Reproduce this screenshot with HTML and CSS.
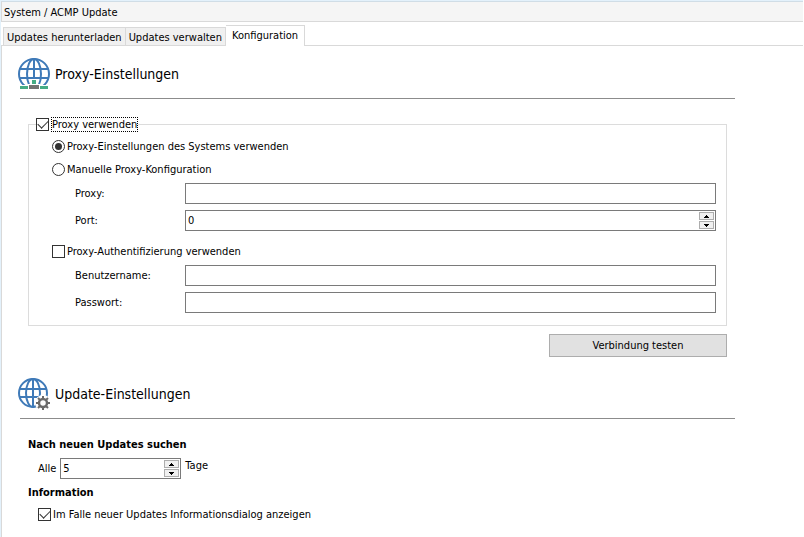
FILE: index.html
```html
<!DOCTYPE html>
<html lang="de">
<head>
  <meta charset="UTF-8">
  <title>System / ACMP Update</title>
  <link rel="stylesheet" href="styles.css">
</head>
<body>
  <div class="window">
    <header class="breadcrumb">System / ACMP Update</header>

    <nav class="tabs" role="tablist">
      <button type="button" class="tab" role="tab">Updates herunterladen</button>
      <button type="button" class="tab" role="tab">Updates verwalten</button>
      <button type="button" class="tab active" role="tab" aria-selected="true">Konfiguration</button>
    </nav>

    <form class="page">
      <section>
        <div class="section-head">
          <svg width="32" height="32" viewBox="0 0 32 32" aria-hidden="true">
            <g fill="none" stroke="#3f7ab8" stroke-width="2">
              <circle cx="16" cy="16" r="15" />
              <ellipse cx="16" cy="16" rx="7" ry="15" />
              <path d="M16 1v30M2 11h28M1 20h30" />
            </g>
            <path d="M0 27h10v-1h3v-5h6v5h3v1h10v5H0z" fill="#fff" />
            <path d="M14 22h4v4h-4zM2 28h8v3H2zM22 28h8v3h-8z" fill="#46ac85" />
            <path d="M11 27h10v4H11z" fill="#737373" />
          </svg>
          <h2>Proxy-Einstellungen</h2>
        </div>
        <hr>

        <fieldset>
          <legend>
            <input type="checkbox" id="useProxy" checked>
            <label for="useProxy" class="focused">Proxy verwenden</label>
          </legend>

          <div class="option">
            <input type="radio" name="mode" id="modeSystem" checked>
            <label for="modeSystem">Proxy-Einstellungen des Systems verwenden</label>
          </div>
          <div class="option">
            <input type="radio" name="mode" id="modeManual">
            <label for="modeManual">Manuelle Proxy-Konfiguration</label>
          </div>

          <div class="fields">
            <label for="proxy">Proxy:</label>
            <input type="text" id="proxy" class="field">
            <label for="port">Port:</label>
            <div class="field spinner">
              <input type="text" id="port" value="0">
              <div class="arrows">
                <button type="button" aria-label="Port erhöhen"><svg width="5" height="3"><path d="M2 0h1v1h1v1h1v1H0V2h1V1h1z" /></svg></button>
                <button type="button" aria-label="Port verringern"><svg width="5" height="3"><path d="M0 0h5v1H4v1H3v1H2V2H1V1H0z" /></svg></button>
              </div>
            </div>
          </div>

          <div class="option">
            <input type="checkbox" id="useAuth">
            <label for="useAuth">Proxy-Authentifizierung verwenden</label>
          </div>

          <div class="fields">
            <label for="user">Benutzername:</label>
            <input type="text" id="user" class="field">
            <label for="password">Passwort:</label>
            <input type="password" id="password" class="field">
          </div>
        </fieldset>

        <button type="button" class="btn-test">Verbindung testen</button>
      </section>

      <section>
        <div class="section-head">
          <svg width="32" height="32" viewBox="0 0 32 32" aria-hidden="true">
            <g fill="none" stroke="#3f7ab8" stroke-width="2">
              <circle cx="15" cy="15" r="14" />
              <ellipse cx="15" cy="15" rx="7" ry="14" />
              <path d="M15 1v28M2 11h26M2 19h26" />
            </g>
            <circle cx="25" cy="25" r="8" fill="#fff" />
            <g stroke="#6b6b6b" fill="none">
              <circle cx="25" cy="25" r="4" stroke-width="2.500" />
              <path d="M25 18v3M25 29v3M18 25h3M29 25h3M20 20l2 2M28 28l2 2M20 30l2-2M28 22l2-2" stroke-width="2" />
            </g>
          </svg>
          <h2>Update-Einstellungen</h2>
        </div>
        <hr>

        <div class="update">
          <h3>Nach neuen Updates suchen</h3>
          <div class="interval">
            <label for="days">Alle</label>
            <div class="field spinner">
              <input type="text" id="days" value="5">
              <div class="arrows">
                <button type="button" aria-label="Tage erhöhen"><svg width="5" height="3"><path d="M2 0h1v1h1v1h1v1H0V2h1V1h1z" /></svg></button>
                <button type="button" aria-label="Tage verringern"><svg width="5" height="3"><path d="M0 0h5v1H4v1H3v1H2V2H1V1H0z" /></svg></button>
              </div>
            </div>
            <span class="unit">Tage</span>
          </div>
          <h3>Information</h3>
          <div class="option">
            <input type="checkbox" id="showInfo" checked>
            <label for="showInfo">Im Falle neuer Updates Informationsdialog anzeigen</label>
          </div>
        </div>
      </section>
    </form>
  </div>
</body>
</html>
```
FILE: styles.css
```css
* {
  box-sizing: border-box;
}

body {
  margin: 0;
  background: #fff;
  color: #000;
  font-family: "DejaVu Sans Condensed", Tahoma, sans-serif;
  font-size: 11px;
  line-height: 15px;
}

input, button {
  margin: 0;
  font: inherit;
  color: inherit;
}

.window {
  min-height: calc(100vh - 1px);
  margin-right: 1px;
  border-top: 1px solid #e3f1fb;
  border-left: 1px solid #e3f1fb;
}

.breadcrumb {
  height: 21px;
  padding: 3px 2px 2px;
  background: #f5f5f5;
  border: 1px solid #d9d9d9;
  border-width: 1px 0 1px 1px;
  border-top-color: #d0dde6;
}

.tabs {
  display: flex;
  align-items: flex-end;
  height: 24px;
  padding: 3px 0 0 2px;
  border-bottom: 1px solid #d9d9d9;
}

.tab {
  height: 18px;
  padding: 1px 3px 0;
  background: #f0f0f0;
  border: 1px solid #d9d9d9;
  border-width: 1px 1px 0 0;
  white-space: nowrap;
}

.tab:first-child {
  border-left-width: 1px;
}

.tab.active {
  height: 21px;
  margin-bottom: -1px;
  padding: 0 6px 2px;
  background: #fff;
}

.page {
  min-height: calc(100vh - 47px);
  padding: 12px 68px 12px 18px;
  border-left: 1px solid #d9d9d9;
}

.section-head {
  display: flex;
  align-items: center;
  gap: 5px;
  margin-left: -2px;
}

hr {
  height: 1px;
  margin: 8px 0 0;
  background: #8c8c8c;
  border: 0;
}

h2 {
  margin: 0;
  font-size: 14px;
  font-weight: normal;
  line-height: 20px;
}

h3 {
  margin: 0;
  font-size: 11px;
  font-weight: bold;
}

fieldset {
  min-width: 0;
  margin: 18px 8px 0;
  padding: 3px 10px 3px 7px;
  border: 1px solid #dcdcdc;
}

legend {
  display: flex;
  align-items: center;
  gap: 2px;
  height: 15px;
  padding: 0;
}

.focused {
  outline: 1px dotted #000;
  outline-offset: -1px;
  padding: 0 1px;
}

input[type="checkbox"],
input[type="radio"] {
  appearance: none;
  flex: none;
  display: grid;
  place-items: center;
  width: 13px;
  height: 13px;
  background: #fff;
  border: 1px solid #333;
}

input[type="radio"] {
  border-radius: 50%;
}

input[type="radio"]:checked::before {
  content: "";
  width: 7px;
  height: 7px;
  border-radius: 50%;
  background: #333;
}

input[type="checkbox"]:checked::before {
  content: "";
  width: 9px;
  height: 5px;
  margin-bottom: 3px;
  border: 1px solid #333;
  border-width: 0 0 1px 1px;
  rotate: -45deg;
}

.option {
  display: flex;
  align-items: center;
  gap: 2px;
  height: 23px;
}

fieldset .option {
  padding-left: 16px;
}

.fields {
  display: grid;
  grid-template-columns: 104px 1fr;
  align-items: center;
  gap: 6px;
  margin: 2px 0 9px 39px;
}

.field {
  width: 100%;
  height: 21px;
  padding: 0 2px;
  background: #fff;
  border: 1px solid #7a7a7a;
}

.spinner {
  display: flex;
  padding: 1px;
}

.spinner input {
  flex: 1;
  min-width: 0;
  padding: 0 1px;
  border: 0;
}

.arrows {
  display: flex;
  flex-direction: column;
  gap: 1px;
}

.arrows button {
  display: grid;
  place-items: center;
  width: 15px;
  height: 8px;
  padding: 0;
  background: #f0f0f0;
  border: 1px solid #adadad;
}

.btn-test {
  display: block;
  width: 178px;
  height: 23px;
  margin: 8px 8px 21px auto;
  padding: 0;
  background: #e1e1e1;
  border: 1px solid #adadad;
}

.update {
  padding: 18px 8px 0;
}

.interval {
  display: flex;
  align-items: center;
  gap: 4px;
  margin: 6px 0 6px 10px;
}

.interval .field {
  width: 121px;
}

.unit {
  align-self: flex-start;
}

.update > .option {
  margin: 3px 0 0 10px;
}
```
